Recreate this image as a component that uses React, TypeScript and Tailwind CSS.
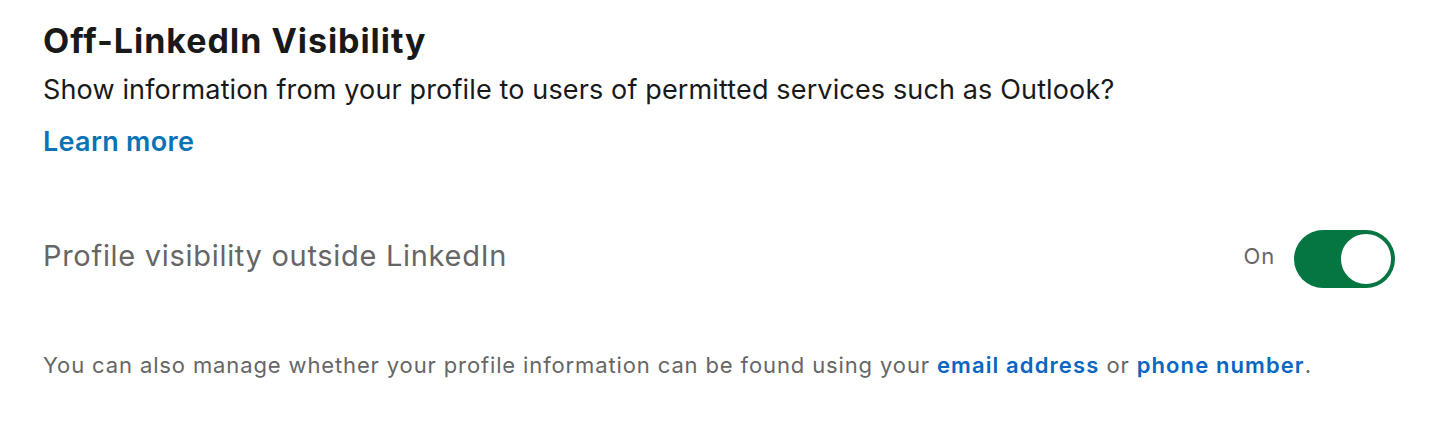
import React, { useState } from "react";

export default function App() {
  const [isOn, setIsOn] = useState(true);

  return (
    <div className="w-[1436px] h-[422px] bg-white font-['Inter',sans-serif] antialiased">
      <div className="pl-[43px] pr-[41px] pt-[21px]">
        <h2 className="text-[34px] leading-[40px] font-bold text-[#191919] tracking-[0.95px]">Off-LinkedIn Visibility</h2>
        <p className="mt-[12px] text-[27px] leading-[34px] text-[#191919] tracking-[0.14px]">
          Show information from your profile to users of permitted services such as Outlook?
        </p>
        <a href="#" className="block mt-[18px] w-fit text-[27px] leading-[34px] font-semibold text-[#0a73b5] tracking-[0.3px]">
          Learn more
        </a>

        <div className="mt-[71px] flex items-center justify-between h-[58px]">
          <span className="mb-[7px] text-[29px] leading-[36px] text-[#666666] tracking-[0.7px]">Profile visibility outside LinkedIn</span>
          <div className="flex items-center gap-[19px]">
            <span className="mb-[6px] text-[22px] leading-[28px] text-[#666666] tracking-[0.8px]">{isOn ? "On" : "Off"}</span>
            <button
              type="button"
              onClick={() => setIsOn(!isOn)}
              className={`relative w-[101px] h-[58px] rounded-full ${isOn ? "bg-[#057642]" : "bg-[#8c8c8c]"}`}
            >
              <span
                className={`absolute top-[2px] w-[54px] h-[54px] rounded-full bg-white border-[2px] border-[#057642] ${isOn ? "right-[2px]" : "left-[2px]"}`}
              />
            </button>
          </div>
        </div>

        <p className="mt-[63px] text-[22px] leading-[28px] text-[#666666] tracking-[0.87px]">
          You can also manage whether your profile information can be found using your{" "}
          <a href="#" className="font-semibold text-[#0a66c2] tracking-[1.1px]">email address</a> or{" "}
          <a href="#" className="font-semibold text-[#0a66c2] tracking-[1.1px]">phone number</a>.
        </p>
      </div>
    </div>
  );
}
